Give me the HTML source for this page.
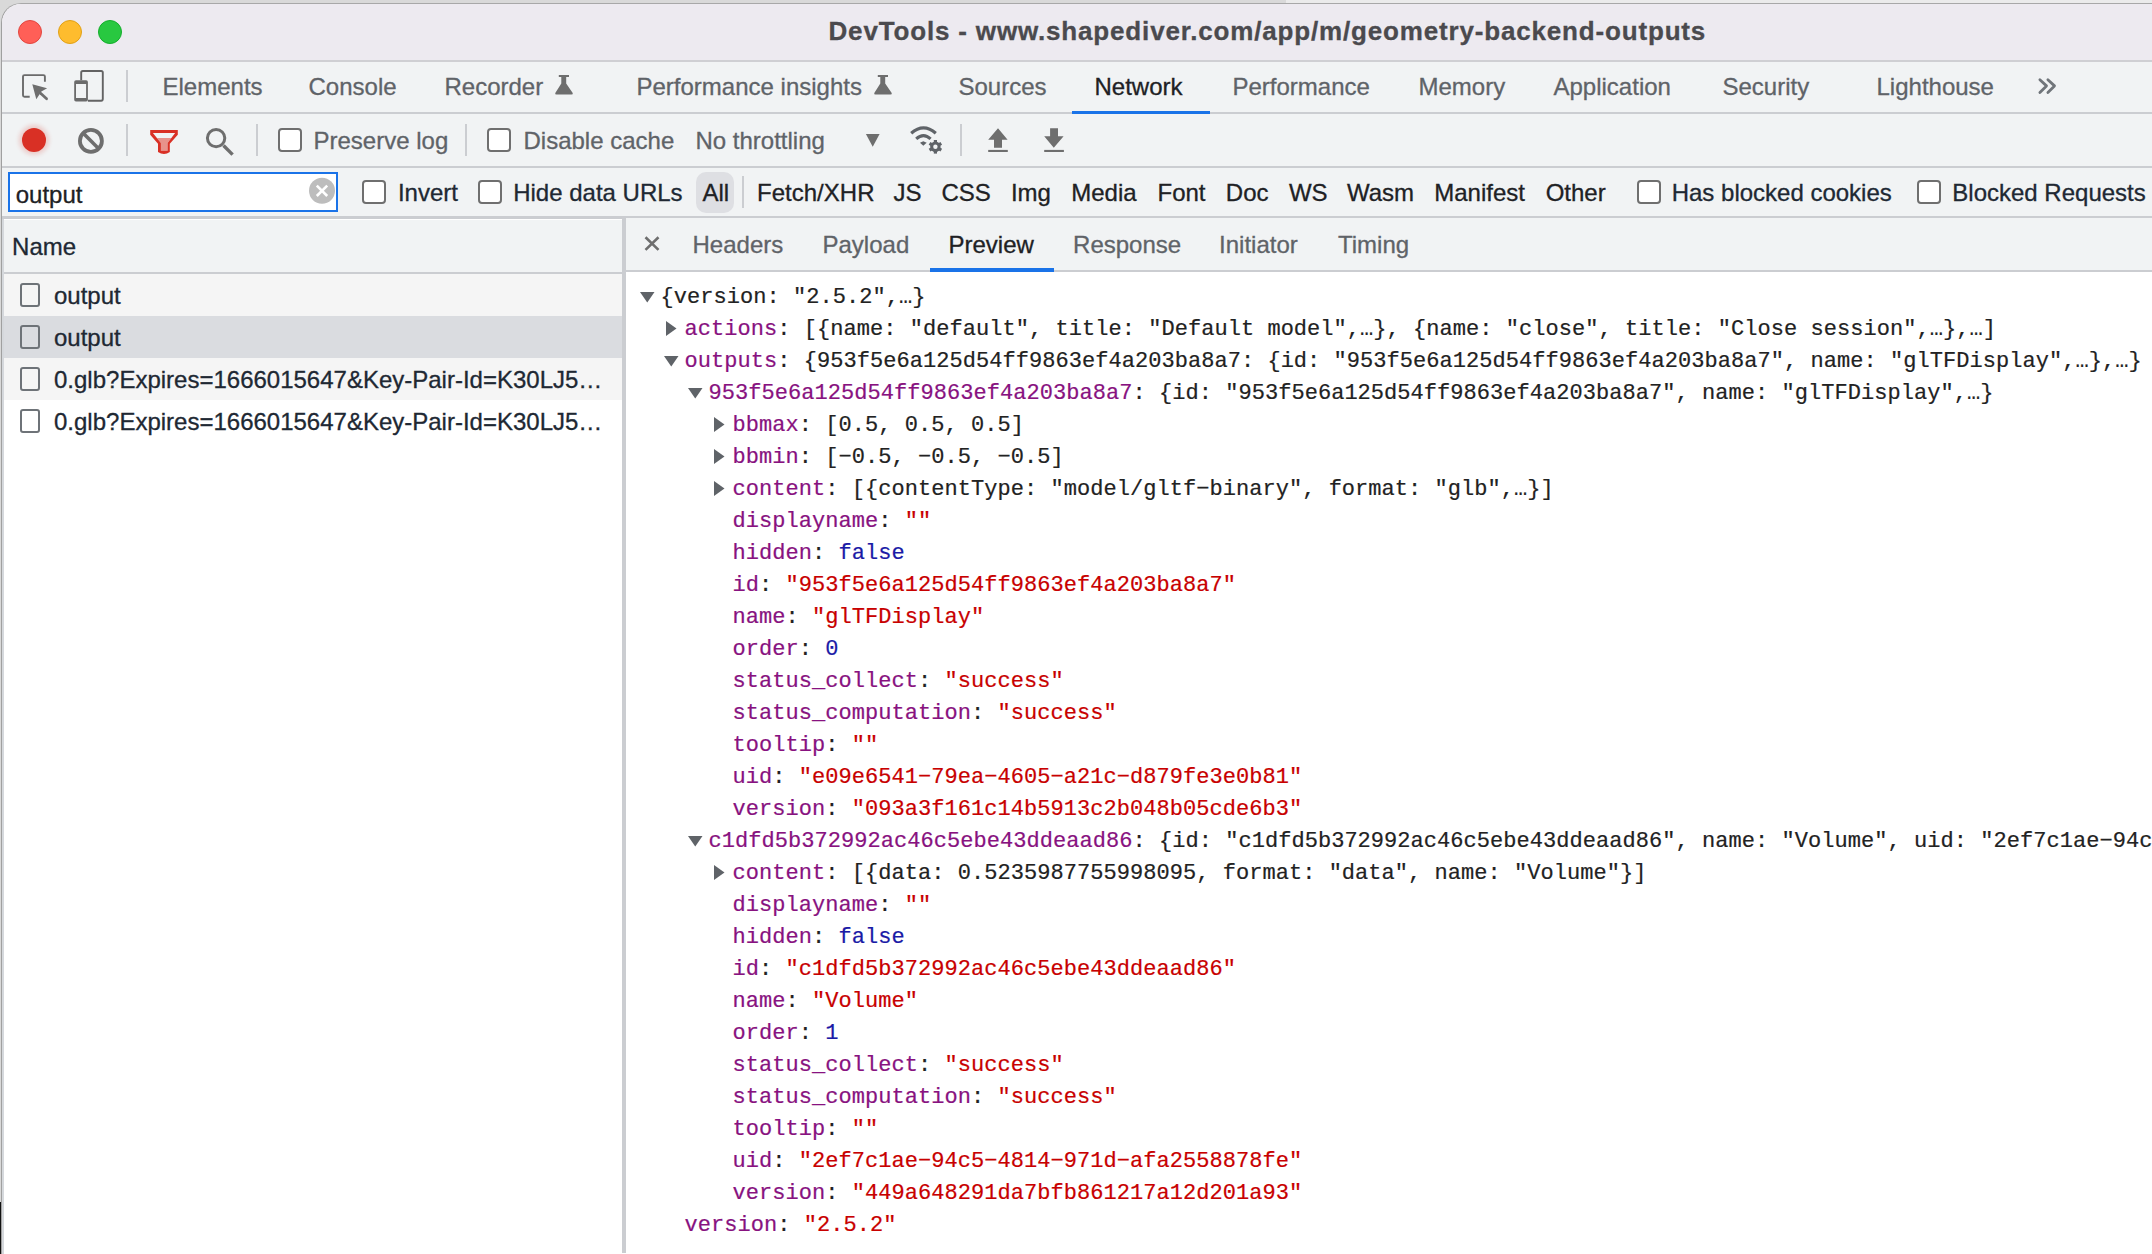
<!DOCTYPE html><html><head><meta charset="utf-8"><style>
*{margin:0;padding:0;box-sizing:border-box}
html,body{width:2152px;height:1254px;overflow:hidden;background:#d9d9d9}
.t{position:absolute;white-space:pre;line-height:1;font-family:"Liberation Sans", sans-serif;-webkit-text-stroke:0.3px currentColor}
.m{position:absolute;white-space:pre;font-family:"Liberation Mono", monospace;font-size:22px;line-height:32px;color:#222;letter-spacing:0.045px;-webkit-text-stroke:0.2px currentColor}
.abs{position:absolute}
.k{color:#881280} .s{color:#c80000} .n{color:#1a1aa6}
</style></head><body>
<div class="abs" style="left:1286px;top:0;width:866px;height:4px;background:#ebebeb"></div>
<div class="abs" style="left:0;top:1202px;width:2px;height:52px;background:#111"></div>
<div class="abs" style="left:1px;top:3px;width:2151px;height:1251px;background:#fff;border-top-left-radius:20px;border-left:1px solid #a0a0a0;border-top:1px solid #a8a8a8;overflow:hidden">
</div>
<div class="abs" style="left:2px;top:4px;width:2150px;height:56px;background:#edeaf0;border-top-left-radius:19px"></div>
<div class="abs" style="left:2px;top:60px;width:2150px;height:2px;background:#cfcfd3"></div>
<div class="abs" style="left:18px;top:20px;width:24px;height:24px;border-radius:50%;background:#ff5f57;border:1px solid #e2463f"></div>
<div class="abs" style="left:58px;top:20px;width:24px;height:24px;border-radius:50%;background:#febc2e;border:1px solid #e1a116"></div>
<div class="abs" style="left:98px;top:20px;width:24px;height:24px;border-radius:50%;background:#28c840;border:1px solid #14ae2c"></div>
<div class="t" style="left:828.5px;top:17.99px;font-size:26px;color:#4b4a4e;font-weight:bold;letter-spacing:0.83px;">DevTools - www.shapediver.com/app/m/geometry-backend-outputs</div>
<div class="abs" style="left:2px;top:62px;width:2150px;height:50px;background:#f1f3f4"></div>
<div class="abs" style="left:2px;top:112px;width:2150px;height:2px;background:#cbcdd1"></div>
<div class="t" style="left:162.5px;top:74.68px;font-size:24px;color:#5f6368;font-weight:normal;">Elements</div>
<div class="t" style="left:308.5px;top:74.68px;font-size:24px;color:#5f6368;font-weight:normal;">Console</div>
<div class="t" style="left:444.5px;top:74.68px;font-size:24px;color:#5f6368;font-weight:normal;">Recorder</div>
<div class="t" style="left:636.5px;top:74.68px;font-size:24px;color:#5f6368;font-weight:normal;">Performance insights</div>
<div class="t" style="left:958.5px;top:74.68px;font-size:24px;color:#5f6368;font-weight:normal;">Sources</div>
<div class="t" style="left:1094.5px;top:74.68px;font-size:24px;color:#202124;font-weight:normal;">Network</div>
<div class="t" style="left:1232.5px;top:74.68px;font-size:24px;color:#5f6368;font-weight:normal;">Performance</div>
<div class="t" style="left:1418.5px;top:74.68px;font-size:24px;color:#5f6368;font-weight:normal;">Memory</div>
<div class="t" style="left:1553.5px;top:74.68px;font-size:24px;color:#5f6368;font-weight:normal;">Application</div>
<div class="t" style="left:1722.5px;top:74.68px;font-size:24px;color:#5f6368;font-weight:normal;">Security</div>
<div class="t" style="left:1876.5px;top:74.68px;font-size:24px;color:#5f6368;font-weight:normal;">Lighthouse</div>
<div class="abs" style="left:1072px;top:111px;width:138px;height:3px;background:#1a73e8"></div>
<div class="abs" style="left:2px;top:114px;width:2150px;height:52px;background:#f1f3f4"></div>
<div class="abs" style="left:2px;top:166px;width:2150px;height:2px;background:#cbcdd1"></div>
<svg class="abs" style="left:16px;top:66px" width="40" height="40"><path d="M13.7 30.8H8.5Q7 30.8 7 29.3V10.6Q7 9.1 8.5 9.1H27.4Q28.9 9.1 28.9 10.6V15.8" stroke="#6b6b6b" stroke-width="1.9" fill="none"/><path d="M16.3 18.2L31.1 22.2L25.4 25.6L20.3 33.3Z" fill="#6e6e6e"/><path d="M24.6 27.2L30.6 32.8" stroke="#6e6e6e" stroke-width="2.7" stroke-linecap="round"/></svg>
<svg class="abs" style="left:68px;top:66px" width="40" height="40"><path d="M13.2 14.2V6.6Q13.2 5 14.8 5H33.2Q34.8 5 34.8 6.6V33.1Q34.8 34.7 33.2 34.7H19.9" stroke="#636363" stroke-width="1.9" fill="none"/><path fill-rule="evenodd" fill="#6b6b6b" d="M8 14.2H18.1Q19.9 14.2 19.9 16V33.8Q19.9 35.6 18.1 35.6H8Q6.2 35.6 6.2 33.8V16Q6.2 14.2 8 14.2ZM8 17.9V32.1H18.1V17.9Z"/></svg>
<div class="abs" style="left:126px;top:70px;width:2px;height:32px;background:#cbcdd1"></div>
<svg class="abs" style="left:548px;top:70px" width="32" height="30"><path d="M10.8 5H21V7H18.2V13.4L24.7 23Q25.3 24.6 23.5 24.6H8.5Q6.7 24.6 7.3 23L13.3 13.4V7H10.8Z" fill="#6e6e6e"/></svg>
<svg class="abs" style="left:867px;top:70px" width="32" height="30"><path d="M10.8 5H21V7H18.2V13.4L24.7 23Q25.3 24.6 23.5 24.6H8.5Q6.7 24.6 7.3 23L13.3 13.4V7H10.8Z" fill="#6e6e6e"/></svg>
<svg class="abs" style="left:2030px;top:70px" width="35" height="30"><path d="M9.9 9.8L16.5 15.9L9.9 22.4M17.9 9.8L24.5 15.9L17.9 22.4" stroke="#70757a" stroke-width="2.8" fill="none" stroke-linecap="round" stroke-linejoin="round"/></svg>
<div class="abs" style="left:22px;top:128px;width:24px;height:24px;border-radius:50%;background:#d93025;box-shadow:0 0 4px 3px rgba(217,48,37,0.2)"></div>
<svg class="abs" style="left:70px;top:120px" width="40" height="40"><circle cx="20.9" cy="20.9" r="11" stroke="#6e6e6e" stroke-width="3.8" fill="none"/><path d="M13.3 13.3L28.5 28.5" stroke="#6e6e6e" stroke-width="3.6"/></svg>
<div class="abs" style="left:126px;top:124px;width:2px;height:32px;background:#cbcdd1"></div>
<svg class="abs" style="left:144px;top:122px" width="40" height="40"><path d="M13 16.1H27.3L23.6 21V28.7H16.9V21Z" fill="#e8928b"/><path fill-rule="evenodd" fill="#d93025" d="M6.2 8H33.8V12.8L25.8 21.7V30Q23 31.9 20 31.9Q17 31.9 14 30V21.7L6.2 12.8ZM8.9 11L16.9 21V28.7H23.6V21L31.1 11Z"/></svg>
<svg class="abs" style="left:200px;top:122px" width="40" height="40"><circle cx="16.1" cy="16.1" r="8.7" stroke="#6e6e6e" stroke-width="3" fill="none"/><path d="M23.5 23.5L32.6 32.6" stroke="#6e6e6e" stroke-width="3.4"/></svg>
<div class="abs" style="left:256px;top:124px;width:2px;height:32px;background:#cbcdd1"></div>
<div class="abs" style="left:278px;top:128px;width:24px;height:24px;border:2px solid #6f6f6f;border-radius:4px;background:#fff"></div>
<div class="t" style="left:313.5px;top:128.68px;font-size:24px;color:#5f6368;font-weight:normal;">Preserve log</div>
<div class="abs" style="left:465px;top:124px;width:2px;height:32px;background:#cbcdd1"></div>
<div class="abs" style="left:487px;top:128px;width:24px;height:24px;border:2px solid #6f6f6f;border-radius:4px;background:#fff"></div>
<div class="t" style="left:523.5px;top:128.68px;font-size:24px;color:#5f6368;font-weight:normal;">Disable cache</div>
<div class="t" style="left:695.5px;top:128.68px;font-size:24px;color:#5f6368;font-weight:normal;">No throttling</div>
<svg class="abs" style="left:860px;top:128px" width="25" height="25"><path d="M5.9 6H19.6L12.75 18.7Z" fill="#6e6e6e"/></svg>
<svg class="abs" style="left:904px;top:120px" width="44" height="40"><path d="M7.2 13.3Q19.5 2.5 31.8 13.3" stroke="#5f6368" stroke-width="3.2" fill="none"/><path d="M12.2 18.9Q19.5 12.3 26.6 18.9" stroke="#5f6368" stroke-width="3.1" fill="none"/><path d="M16 22.7L19.3 21.2L22.7 22.7L19.3 25.8Z" fill="#5f6368"/><g transform="translate(31.4 26.8)" fill="#5f6368"><circle r="5.2"/><rect x="-1.6" y="-6.8" width="3.2" height="13.6"/><rect x="-1.6" y="-6.8" width="3.2" height="13.6" transform="rotate(60)"/><rect x="-1.6" y="-6.8" width="3.2" height="13.6" transform="rotate(120)"/><circle r="2.2" fill="#f1f3f4"/></g></svg>
<div class="abs" style="left:960px;top:124px;width:2px;height:32px;background:#cbcdd1"></div>
<svg class="abs" style="left:980px;top:120px" width="90" height="40"><path d="M18 8.2L27.6 19.7H22V27.8H14V19.7H8.2Z" fill="#6e6e6e"/><rect x="8.2" y="29.9" width="19.6" height="2.1" fill="#6e6e6e"/><path d="M70.1 8.2H78V16.3H83.6L73.8 27.8L64.2 16.3H70.1Z" fill="#6e6e6e"/><rect x="64.2" y="29.9" width="19.7" height="2.1" fill="#6e6e6e"/></svg>
<div class="abs" style="left:2px;top:168px;width:2150px;height:48px;background:#f1f3f4"></div>
<div class="abs" style="left:2px;top:216px;width:2150px;height:2px;background:#cbcdd1"></div>
<div class="abs" style="left:2px;top:218px;width:620px;height:2px;background:#cbcdd1"></div>
<div class="abs" style="left:8px;top:172px;width:330px;height:40px;border:2px solid #1a73e8;background:#fff"></div>
<div class="t" style="left:15.7px;top:182.98px;font-size:24px;color:#202124;font-weight:normal;">output</div>
<svg class="abs" style="left:308px;top:177px" width="28" height="28"><circle cx="14" cy="13.8" r="13" fill="#bdbdbd"/><path d="M8.8 8.6L19.2 19M19.2 8.6L8.8 19" stroke="#fff" stroke-width="2.6"/></svg>
<div class="abs" style="left:362px;top:180px;width:24px;height:24px;border:2px solid #6f6f6f;border-radius:4px;background:#fff"></div>
<div class="t" style="left:397.9px;top:180.88px;font-size:24px;color:#202833;font-weight:normal;">Invert</div>
<div class="abs" style="left:478px;top:180px;width:24px;height:24px;border:2px solid #6f6f6f;border-radius:4px;background:#fff"></div>
<div class="t" style="left:513.2px;top:180.88px;font-size:24px;color:#202833;font-weight:normal;">Hide data URLs</div>
<div class="abs" style="left:696px;top:172px;width:38px;height:41px;border-radius:10px;background:#dedfe3"></div>
<div class="t" style="left:702.5px;top:180.88px;font-size:24px;color:#202124;font-weight:normal;">All</div>
<div class="abs" style="left:742px;top:176px;width:2px;height:32px;background:#cbcdd1"></div>
<div class="t" style="left:757.1px;top:180.88px;font-size:24px;color:#202124;font-weight:normal;">Fetch/XHR</div>
<div class="t" style="left:893.4px;top:180.88px;font-size:24px;color:#202124;font-weight:normal;">JS</div>
<div class="t" style="left:941.5px;top:180.88px;font-size:24px;color:#202124;font-weight:normal;">CSS</div>
<div class="t" style="left:1010.9px;top:180.88px;font-size:24px;color:#202124;font-weight:normal;">Img</div>
<div class="t" style="left:1071.2px;top:180.88px;font-size:24px;color:#202124;font-weight:normal;">Media</div>
<div class="t" style="left:1157.5px;top:180.88px;font-size:24px;color:#202124;font-weight:normal;">Font</div>
<div class="t" style="left:1225.8px;top:180.88px;font-size:24px;color:#202124;font-weight:normal;">Doc</div>
<div class="t" style="left:1288.9px;top:180.88px;font-size:24px;color:#202124;font-weight:normal;">WS</div>
<div class="t" style="left:1347.0px;top:180.88px;font-size:24px;color:#202124;font-weight:normal;">Wasm</div>
<div class="t" style="left:1434.2px;top:180.88px;font-size:24px;color:#202124;font-weight:normal;">Manifest</div>
<div class="t" style="left:1545.7px;top:180.88px;font-size:24px;color:#202124;font-weight:normal;">Other</div>
<div class="abs" style="left:1637px;top:180px;width:24px;height:24px;border:2px solid #6f6f6f;border-radius:4px;background:#fff"></div>
<div class="t" style="left:1671.7px;top:180.88px;font-size:24px;color:#202833;font-weight:normal;">Has blocked cookies</div>
<div class="abs" style="left:1917px;top:180px;width:24px;height:24px;border:2px solid #6f6f6f;border-radius:4px;background:#fff"></div>
<div class="t" style="left:1952.3px;top:180.88px;font-size:24px;color:#202833;font-weight:normal;">Blocked Requests</div>
<div class="abs" style="left:2px;top:219px;width:620px;height:1035px;background:#fff;border-left:2px solid #d5d8dc"></div>
<div class="abs" style="left:4px;top:220px;width:618px;height:52px;background:#f1f3f4"></div>
<div class="abs" style="left:4px;top:272px;width:618px;height:2px;background:#cbcdd1"></div>
<div class="t" style="left:12.1px;top:234.68px;font-size:24px;color:#202833;font-weight:normal;">Name</div>
<div class="abs" style="left:4px;top:274px;width:618px;height:42px;background:#f5f5f5"></div>
<div class="abs" style="left:20px;top:283px;width:20px;height:24px;border:2px solid #6e7378;border-radius:3px;background:#fff0"></div>
<div class="t" style="left:54.0px;top:283.68px;font-size:24px;color:#202833;font-weight:normal;">output</div>
<div class="abs" style="left:4px;top:316px;width:618px;height:42px;background:#dadce0"></div>
<div class="abs" style="left:20px;top:325px;width:20px;height:24px;border:2px solid #6e7378;border-radius:3px;background:#fff0"></div>
<div class="t" style="left:54.0px;top:325.68px;font-size:24px;color:#202833;font-weight:normal;">output</div>
<div class="abs" style="left:4px;top:358px;width:618px;height:42px;background:#f5f5f5"></div>
<div class="abs" style="left:20px;top:367px;width:20px;height:24px;border:2px solid #6e7378;border-radius:3px;background:#fff0"></div>
<div class="t" style="left:54.0px;top:367.68px;font-size:24px;color:#202833;font-weight:normal;">0.glb?Expires=1666015647&amp;Key-Pair-Id=K30LJ5…</div>
<div class="abs" style="left:4px;top:400px;width:618px;height:42px;background:#ffffff"></div>
<div class="abs" style="left:20px;top:409px;width:20px;height:24px;border:2px solid #6e7378;border-radius:3px;background:#fff0"></div>
<div class="t" style="left:54.0px;top:409.68px;font-size:24px;color:#202833;font-weight:normal;">0.glb?Expires=1666015647&amp;Key-Pair-Id=K30LJ5…</div>
<div class="abs" style="left:622px;top:218px;width:4px;height:1035px;background:#cbcdd1"></div>
<div class="abs" style="left:626px;top:218px;width:1526px;height:52px;background:#f1f3f4"></div>
<div class="abs" style="left:626px;top:270px;width:1526px;height:2px;background:#cbcdd1"></div>
<div class="t" style="left:692.5px;top:232.68px;font-size:24px;color:#5f6368;font-weight:normal;">Headers</div>
<div class="t" style="left:822.5px;top:232.68px;font-size:24px;color:#5f6368;font-weight:normal;">Payload</div>
<div class="t" style="left:948.5px;top:232.68px;font-size:24px;color:#202124;font-weight:normal;">Preview</div>
<div class="t" style="left:1073.1px;top:232.68px;font-size:24px;color:#5f6368;font-weight:normal;">Response</div>
<div class="t" style="left:1219.1px;top:232.68px;font-size:24px;color:#5f6368;font-weight:normal;">Initiator</div>
<div class="t" style="left:1338.0px;top:232.68px;font-size:24px;color:#5f6368;font-weight:normal;">Timing</div>
<svg class="abs" style="left:640px;top:232px" width="24" height="24"><path d="M5.5 5.3L18.5 17.9M18.5 5.3L5.5 17.9" stroke="#6e6e6e" stroke-width="2.6"/></svg>
<div class="abs" style="left:930px;top:268px;width:124px;height:4px;background:#1a73e8"></div>
<div class="abs" style="left:626px;top:272px;width:1526px;height:982px;overflow:hidden">
<div class="m" style="left:34.5px;top:10px">{version: &quot;2.5.2&quot;,…}</div>
<svg class="abs" style="left:14px;top:20px" width="15" height="11"><path d="M0 0H14.5L7.25 10.6Z" fill="#5f6368"/></svg>
<div class="m" style="left:58.5px;top:42px"><span class="k">actions</span>: [{name: &quot;default&quot;, title: &quot;Default model&quot;,…}, {name: &quot;close&quot;, title: &quot;Close session&quot;,…},…]</div>
<svg class="abs" style="left:40px;top:48.5px" width="11" height="15"><path d="M0 0L10.5 7.5L0 15Z" fill="#5f6368"/></svg>
<div class="m" style="left:58.5px;top:74px"><span class="k">outputs</span>: {953f5e6a125d54ff9863ef4a203ba8a7: {id: &quot;953f5e6a125d54ff9863ef4a203ba8a7&quot;, name: &quot;glTFDisplay&quot;,…},…}</div>
<svg class="abs" style="left:38px;top:84px" width="15" height="11"><path d="M0 0H14.5L7.25 10.6Z" fill="#5f6368"/></svg>
<div class="m" style="left:82.5px;top:106px"><span class="k">953f5e6a125d54ff9863ef4a203ba8a7</span>: {id: &quot;953f5e6a125d54ff9863ef4a203ba8a7&quot;, name: &quot;glTFDisplay&quot;,…}</div>
<svg class="abs" style="left:62px;top:116px" width="15" height="11"><path d="M0 0H14.5L7.25 10.6Z" fill="#5f6368"/></svg>
<div class="m" style="left:106.5px;top:138px"><span class="k">bbmax</span>: [0.5, 0.5, 0.5]</div>
<svg class="abs" style="left:88px;top:144.5px" width="11" height="15"><path d="M0 0L10.5 7.5L0 15Z" fill="#5f6368"/></svg>
<div class="m" style="left:106.5px;top:170px"><span class="k">bbmin</span>: [−0.5, −0.5, −0.5]</div>
<svg class="abs" style="left:88px;top:176.5px" width="11" height="15"><path d="M0 0L10.5 7.5L0 15Z" fill="#5f6368"/></svg>
<div class="m" style="left:106.5px;top:202px"><span class="k">content</span>: [{contentType: &quot;model/gltf−binary&quot;, format: &quot;glb&quot;,…}]</div>
<svg class="abs" style="left:88px;top:208.5px" width="11" height="15"><path d="M0 0L10.5 7.5L0 15Z" fill="#5f6368"/></svg>
<div class="m" style="left:106.5px;top:234px"><span class="k">displayname</span>: <span class="s">&quot;&quot;</span></div>
<div class="m" style="left:106.5px;top:266px"><span class="k">hidden</span>: <span class="n">false</span></div>
<div class="m" style="left:106.5px;top:298px"><span class="k">id</span>: <span class="s">&quot;953f5e6a125d54ff9863ef4a203ba8a7&quot;</span></div>
<div class="m" style="left:106.5px;top:330px"><span class="k">name</span>: <span class="s">&quot;glTFDisplay&quot;</span></div>
<div class="m" style="left:106.5px;top:362px"><span class="k">order</span>: <span class="n">0</span></div>
<div class="m" style="left:106.5px;top:394px"><span class="k">status_collect</span>: <span class="s">&quot;success&quot;</span></div>
<div class="m" style="left:106.5px;top:426px"><span class="k">status_computation</span>: <span class="s">&quot;success&quot;</span></div>
<div class="m" style="left:106.5px;top:458px"><span class="k">tooltip</span>: <span class="s">&quot;&quot;</span></div>
<div class="m" style="left:106.5px;top:490px"><span class="k">uid</span>: <span class="s">&quot;e09e6541−79ea−4605−a21c−d879fe3e0b81&quot;</span></div>
<div class="m" style="left:106.5px;top:522px"><span class="k">version</span>: <span class="s">&quot;093a3f161c14b5913c2b048b05cde6b3&quot;</span></div>
<div class="m" style="left:82.5px;top:554px"><span class="k">c1dfd5b372992ac46c5ebe43ddeaad86</span>: {id: &quot;c1dfd5b372992ac46c5ebe43ddeaad86&quot;, name: &quot;Volume&quot;, uid: &quot;2ef7c1ae−94c5−4814−971d−afa2558878fe&quot;,…}</div>
<svg class="abs" style="left:62px;top:564px" width="15" height="11"><path d="M0 0H14.5L7.25 10.6Z" fill="#5f6368"/></svg>
<div class="m" style="left:106.5px;top:586px"><span class="k">content</span>: [{data: 0.5235987755998095, format: &quot;data&quot;, name: &quot;Volume&quot;}]</div>
<svg class="abs" style="left:88px;top:592.5px" width="11" height="15"><path d="M0 0L10.5 7.5L0 15Z" fill="#5f6368"/></svg>
<div class="m" style="left:106.5px;top:618px"><span class="k">displayname</span>: <span class="s">&quot;&quot;</span></div>
<div class="m" style="left:106.5px;top:650px"><span class="k">hidden</span>: <span class="n">false</span></div>
<div class="m" style="left:106.5px;top:682px"><span class="k">id</span>: <span class="s">&quot;c1dfd5b372992ac46c5ebe43ddeaad86&quot;</span></div>
<div class="m" style="left:106.5px;top:714px"><span class="k">name</span>: <span class="s">&quot;Volume&quot;</span></div>
<div class="m" style="left:106.5px;top:746px"><span class="k">order</span>: <span class="n">1</span></div>
<div class="m" style="left:106.5px;top:778px"><span class="k">status_collect</span>: <span class="s">&quot;success&quot;</span></div>
<div class="m" style="left:106.5px;top:810px"><span class="k">status_computation</span>: <span class="s">&quot;success&quot;</span></div>
<div class="m" style="left:106.5px;top:842px"><span class="k">tooltip</span>: <span class="s">&quot;&quot;</span></div>
<div class="m" style="left:106.5px;top:874px"><span class="k">uid</span>: <span class="s">&quot;2ef7c1ae−94c5−4814−971d−afa2558878fe&quot;</span></div>
<div class="m" style="left:106.5px;top:906px"><span class="k">version</span>: <span class="s">&quot;449a648291da7bfb861217a12d201a93&quot;</span></div>
<div class="m" style="left:58.5px;top:938px"><span class="k">version</span>: <span class="s">&quot;2.5.2&quot;</span></div>
</div>
</body></html>
